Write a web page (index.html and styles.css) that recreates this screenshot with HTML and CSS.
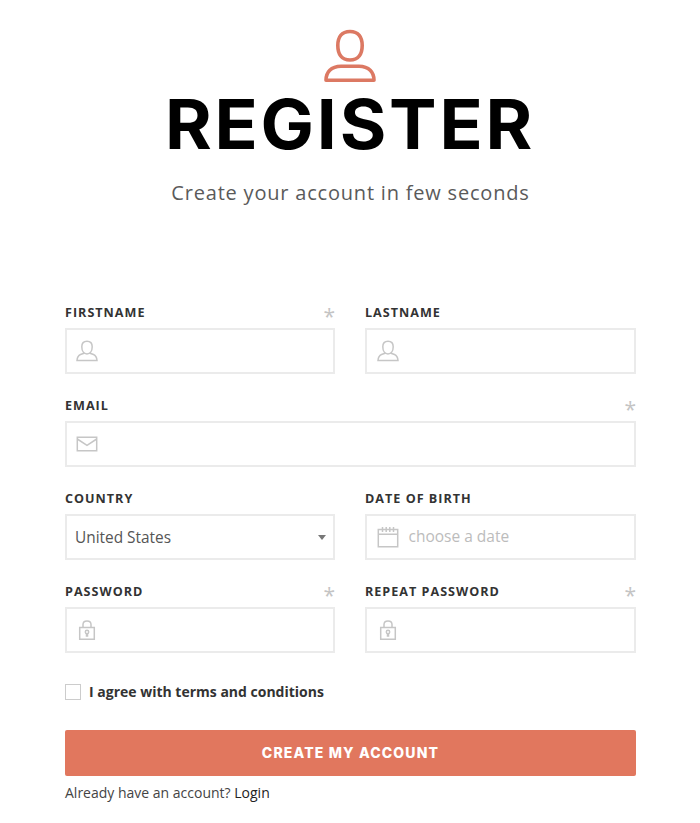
FILE: index.html
```html
<!DOCTYPE html>
<html lang="en">
<head>
<meta charset="utf-8">
<title>Register</title>
<link rel="stylesheet" href="styles.css">
</head>
<body>
<svg class="defs" width="0" height="0" aria-hidden="true">
  <symbol id="user" viewBox="0 0 22 22"><path d="M11 1.200C7.700 1.200 5.800 3.500 5.800 6.800C5.800 10.900 7.900 13.900 11 13.900S16.200 10.900 16.200 6.800C16.200 3.500 14.300 1.200 11 1.200ZM8 13.200L4.500 14.500C2 15.500 1.200 17.500 1 20.500H21C20.800 17.500 20 15.500 17.500 14.500L14 13.200"/></symbol>
  <symbol id="lock" viewBox="0 0 22 22"><path d="M3.700 8.600H18.300V20.300H3.700ZM7 8.500V5.500C7 .8 15 .8 15 5.500V8.500M10.500 14.500V17H11.500V14.500"/><circle cx="11" cy="13" r="1.700"/></symbol>
</svg>
<main class="page">
  <header class="header">
    <svg class="avatar" viewBox="0 0 54 54"><path d="M27 2.500C18.500 2.500 14.800 8.300 14.800 16.500C14.800 25 18.500 31 27 31S39.200 25 39.200 16.500C39.200 8.300 35.500 2.500 27 2.500ZM18 37.200H36C46 37.200 51 43.500 51 51.300H3C3 43.500 8 37.200 18 37.200Z"/></svg>
    <h1 class="title">REGISTER</h1>
    <p class="subtitle">Create your account in few seconds</p>
  </header>
  <form class="form">
    <div class="field">
      <div class="label"><span>FIRSTNAME</span><span class="star">*</span></div>
      <div class="control"><svg class="icon"><use href="#user"/></svg></div>
    </div>
    <div class="field">
      <div class="label"><span>LASTNAME</span></div>
      <div class="control inset"><svg class="icon"><use href="#user"/></svg></div>
    </div>
    <div class="field wide">
      <div class="label"><span>EMAIL</span><span class="star">*</span></div>
      <div class="control"><svg class="icon" viewBox="0 0 22 22"><path d="M1.300 4.300H20.700V17.700H1.300ZM1.300 6L11 12.300L20.700 6"/></svg></div>
    </div>
    <div class="field">
      <div class="label"><span>COUNTRY</span></div>
      <div class="control select"><span>United States</span><i class="arrow"></i></div>
    </div>
    <div class="field">
      <div class="label"><span>DATE OF BIRTH</span></div>
      <div class="control inset"><svg class="icon" viewBox="0 0 22 22"><path d="M1.300 3.500H20.700V20.700H1.300ZM1.300 8.300H20.700M5.500 1V6M9.200 1V6M12.800 1V6M16.500 1V6"/></svg><span class="placeholder">choose a date</span></div>
    </div>
    <div class="field">
      <div class="label"><span>PASSWORD</span><span class="star">*</span></div>
      <div class="control"><svg class="icon"><use href="#lock"/></svg></div>
    </div>
    <div class="field">
      <div class="label"><span>REPEAT PASSWORD</span><span class="star">*</span></div>
      <div class="control inset"><svg class="icon"><use href="#lock"/></svg></div>
    </div>
  </form>
  <label class="terms"><i class="box"></i><span class="agree">I agree with terms and conditions</span></label>
  <button class="submit" type="button">CREATE MY ACCOUNT</button>
  <p class="login"><span class="login-text">Already have an account? <a>Login</a></span></p>
</main>
</body>
</html>
```
FILE: styles.css
```css
* { box-sizing: border-box; }
body { margin: 0; background: #fff; font-family: "Open Sans", sans-serif; color: #333; }
.defs { display: block; height: 0; }
.page { width: 571px; margin-left: 65px; }
.header { display: flex; flex-direction: column; align-items: center; height: 298px; padding-top: 29px; }
.avatar { width: 54px; height: 54px; margin-right: 1px; fill: none; stroke: #dc7963; stroke-width: 3.600; stroke-linejoin: round; }
.title { margin: 0; height: 82px; line-height: 83px; font-family: Inter, sans-serif; font-weight: 750; font-size: 68.500px; letter-spacing: 2.700px; color: #000; white-space: nowrap; transform: scaleX(1.040); }
.subtitle { margin: 13px 0 0; line-height: 30px; font-size: 20px; letter-spacing: 0.800px; color: #5a5a5a; white-space: nowrap; }
.form { display: grid; grid-template-columns: 270px 271px; gap: 17px 30px; }
.wide { grid-column: span 2; }
.label { display: flex; justify-content: space-between; height: 30px; line-height: 30px; font-size: 12.600px; font-weight: 700; letter-spacing: 1px; white-space: nowrap; }
.star { font-size: 21px; font-weight: 400; line-height: 36px; letter-spacing: 0; color: #c4c4c4; }
.control { display: flex; align-items: center; height: 46px; border: 2px solid #ebebeb; padding-left: 9px; }
.inset { padding-left: 9.500px; }
.icon { width: 22px; height: 22px; fill: none; stroke: #c6c6c6; stroke-width: 1.500; }
.placeholder { margin: -2px 0 0 10px; font-size: 15.500px; color: #bcbcbc; }
.select { justify-content: space-between; padding: 0 7px 0 8px; font-size: 15.400px; color: #555; }
.arrow { border: 4.500px solid transparent; border-top: 5px solid #777; border-bottom: 0; }
.terms { display: flex; align-items: center; height: 16px; margin-top: 31px; gap: 8px; font-size: 14px; font-weight: 700; }
.agree { margin-top: -2px; }
.box { width: 16px; height: 16px; border: 1px solid #ccc; }
.submit { display: block; width: 100%; height: 46px; margin: 30px 0 0; border: 0; padding: 0 0 2px; border-radius: 2px; background: #e1775e; color: #fff; font-family: Inter, sans-serif; font-size: 14px; font-weight: 800; letter-spacing: 1.150px; }
.login { margin: 7px 0 0; line-height: 20px; font-size: 14px; color: #444; }
.login a { color: #222; }
```
